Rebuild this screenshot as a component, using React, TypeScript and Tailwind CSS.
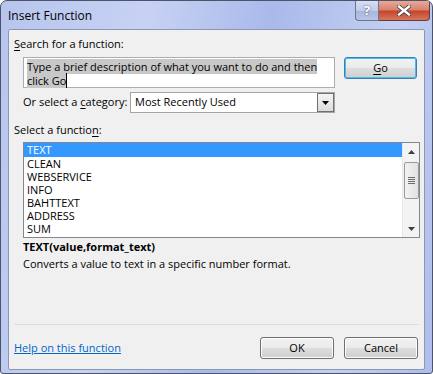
const font = { fontFamily: '"Open Sans", "Noto Sans", sans-serif' };

const functions = ["TEXT", "CLEAN", "WEBSERVICE", "INFO", "BAHTTEXT", "ADDRESS", "SUM"];

const Win7Button = ({ label, focused, className }: { label: React.ReactNode; focused?: boolean; className: string }) => (
  <div
    className={`${className} rounded-[3px] border ${
      focused ? "border-[#3c7fb1] shadow-[inset_0_0_0_1px_#48bdf0]" : "border-[#707070] shadow-[inset_0_0_0_1px_#fcfcfc]"
    } bg-[linear-gradient(#f2f2f2_0%,#ebebeb_48%,#dddddd_52%,#cfcfcf_100%)] flex items-center justify-center text-[11px] text-black`}
  >
    {label}
  </div>
);

export default function App() {
  return (
    <div
      style={font}
      className="w-[433px] h-[374px] flex flex-col rounded-t-[7px] rounded-b-[3px] border border-[#4b5468] bg-[linear-gradient(100deg,#b7c5ee_0%,#c7d2f3_30%,#a9b9ea_55%,#c3cff2_80%,#aebdea_100%)] overflow-hidden"
    >
      {/* title bar */}
      <div className="h-[28px] flex items-start shrink-0">
        <span className="pl-[7px] pt-[6px] text-[12px] text-black">Insert Function</span>
        <div className="ml-auto mr-[2px] flex h-[20px]">
          <div className="w-[24px] h-[20px] rounded-bl-[4px] border border-t-0 border-[#6a7590] bg-[linear-gradient(#d6def4_0%,#c1cceb_50%,#a9b6dc_52%,#b9c6e8_100%)] flex items-center justify-center">
            <span className="text-[13px] font-bold text-white [text-shadow:0_0_2px_#34405a] leading-none">?</span>
          </div>
          <div className="w-[51px] h-[20px] rounded-br-[4px] border border-t-0 border-l-0 border-[#6a3b36] bg-[linear-gradient(#e9a899_0%,#d7826f_48%,#c74328_52%,#d3775f_100%)] flex items-center justify-center">
            <svg width="14" height="11" viewBox="0 0 14 11">
              <path d="M2 1.5 L12 9.5 M12 1.5 L2 9.5" stroke="#3a3a3a" strokeWidth="4" strokeLinecap="square" />
              <path d="M2 1.5 L12 9.5 M12 1.5 L2 9.5" stroke="#ffffff" strokeWidth="2.4" strokeLinecap="square" />
            </svg>
          </div>
        </div>
      </div>

      {/* client area */}
      <div className="mx-[7px] h-[341px] rounded-[2px] border border-[#8c97b3] bg-[#f0f0f0] flex flex-col text-[11px] text-black px-[5px]">
        <div className="mt-[6px] h-[16px] leading-[16px]">
          <span className="underline underline-offset-2">S</span>earch for a function:
        </div>

        <div className="mt-[5px] flex items-start">
          <div className="ml-[9px] w-[312px] h-[31px] border border-[#abadb3] bg-white px-[3px] pt-[2px] leading-[14px]">
            <span className="bg-[#c8c8c8]">Type a brief description of what you want to do and then</span>
            <br />
            <span className="bg-[#c8c8c8] border-r border-black">click Go</span>
          </div>
          <Win7Button
            focused
            className="ml-[9px] w-[73px] h-[22px]"
            label={
              <span>
                <span className="underline underline-offset-2">G</span>o
              </span>
            }
          />
        </div>

        <div className="mt-[4px] flex items-center">
          <span className="ml-[9px] w-[107px] whitespace-nowrap">
            Or select a <span className="underline underline-offset-2">c</span>ategory:
          </span>
          <div className="w-[205px] h-[21px] border border-[#a5a5a5] bg-white flex items-center">
            <span className="pl-[4px] flex-1">Most Recently Used</span>
            <div className="w-[17px] h-[19px] border border-[#707070] bg-[linear-gradient(#f4f4f4,#dcdcdc)] flex items-center justify-center">
              <svg width="7" height="4" viewBox="0 0 7 4">
                <path d="M0 0 H7 L3.5 4 Z" fill="#000" />
              </svg>
            </div>
          </div>
        </div>

        <div className="mt-[9px] h-[16px] leading-[16px]">
          Select a functio<span className="underline underline-offset-2">n</span>:
        </div>

        <div className="mt-[4px] ml-[9px] w-[397px] h-[96px] border border-[#828790] bg-white flex">
          <div className="flex-1 flex flex-col">
            {functions.map((f, i) => (
              <div
                key={f}
                className={`pl-[3px] ${i === 0 ? "bg-[#3399ff] text-white h-[14px] leading-[14px]" : "h-[13px] leading-[13px] text-black"}`}
              >
                {f}
              </div>
            ))}
          </div>
          <div className="w-[17px] bg-[#f3f3f3] border-l border-[#e8e8e8] flex flex-col items-center">
            <div className="h-[17px] flex items-center justify-center">
              <svg width="7" height="4" viewBox="0 0 7 4">
                <path d="M0 4 H7 L3.5 0 Z" fill="#404040" />
              </svg>
            </div>
            <div className="mt-[2px] w-[15px] h-[37px] rounded-[2px] border border-[#9a9a9a] bg-[linear-gradient(90deg,#f2f2f2,#e2e2e2)] flex flex-col items-center justify-center gap-[1px]">
              <div className="w-[7px] h-[1px] bg-[#6e6e6e]" />
              <div className="w-[7px] h-[1px] bg-[#6e6e6e]" />
              <div className="w-[7px] h-[1px] bg-[#6e6e6e]" />
              <div className="w-[7px] h-[1px] bg-[#6e6e6e]" />
            </div>
            <div className="mt-auto h-[17px] flex items-center justify-center">
              <svg width="7" height="4" viewBox="0 0 7 4">
                <path d="M0 0 H7 L3.5 4 Z" fill="#404040" />
              </svg>
            </div>
          </div>
        </div>

        <div className="mt-[1px] ml-[9px] h-[16px] leading-[16px] font-bold">TEXT(value,format_text)</div>
        <div className="mt-[1px] ml-[9px] h-[16px] leading-[16px]">Converts a value to text in a specific number format.</div>

        <div className="mt-[52px] h-[1px] bg-[#d5dfe5]" />

        <div className="mt-[12px] flex items-center">
          <span className="text-[#0066cc] underline underline-offset-1">Help on this function</span>
          <Win7Button className="ml-auto w-[74px] h-[22px]" label="OK" />
          <Win7Button className="ml-[10px] mr-[1px] w-[74px] h-[22px]" label="Cancel" />
        </div>
      </div>
    </div>
  );
}
